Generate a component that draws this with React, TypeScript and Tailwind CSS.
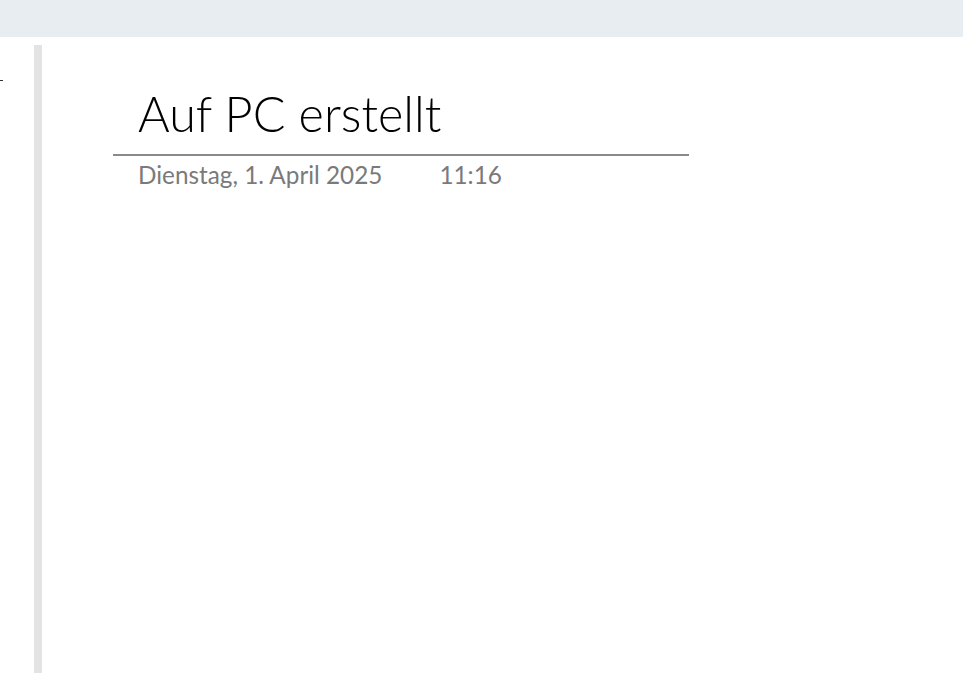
import React from "react";

export default function App() {
  return (
    <div className="h-[673px] w-[963px] overflow-hidden bg-white flex flex-col font-['Lato','Noto_Sans',sans-serif]">
      {/* top bar */}
      <div className="h-[37px] shrink-0 bg-[#e8edf2]" />

      <div className="flex flex-1 min-h-0">
        {/* left strip with tiny dash */}
        <div className="w-[34px] shrink-0 pt-[43px]">
          <div className="h-px w-[3px] bg-[#333]" />
        </div>
        {/* scroll gutter */}
        <div className="mt-[8px] w-[8px] shrink-0 bg-[#e3e3e3]" />

        {/* page */}
        <div className="flex-1 pl-[71px] pt-[48px]">
          <div className="w-[576px]">
            <div className="pl-[25px] text-[48.5px] font-light leading-[56px] text-black">
              Auf PC erstellt
            </div>
            <div className="mt-[13px] h-[2px] bg-[#8a8a8a]" />
            <div className="mt-[5px] flex pl-[25px] text-[24.3px] leading-[28px] text-[#7a7a7a]">
              <span>Dienstag, 1. April 2025</span>
              <span className="ml-[57px]">11:16</span>
            </div>
          </div>
        </div>
      </div>
    </div>
  );
}
